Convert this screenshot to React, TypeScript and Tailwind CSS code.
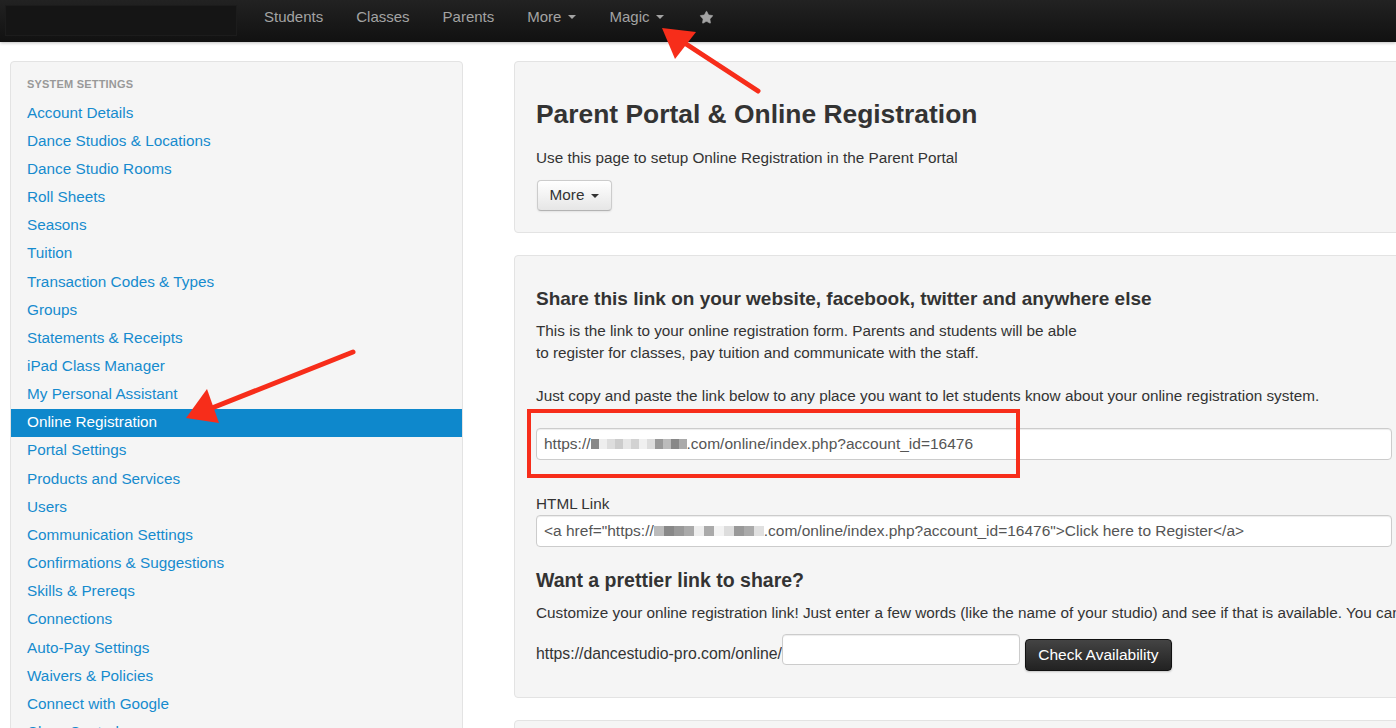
import { Star } from "lucide-react";

const SETTINGS = [
  "Account Details",
  "Dance Studios & Locations",
  "Dance Studio Rooms",
  "Roll Sheets",
  "Seasons",
  "Tuition",
  "Transaction Codes & Types",
  "Groups",
  "Statements & Receipts",
  "iPad Class Manager",
  "My Personal Assistant",
  "Online Registration",
  "Portal Settings",
  "Products and Services",
  "Users",
  "Communication Settings",
  "Confirmations & Suggestions",
  "Skills & Prereqs",
  "Connections",
  "Auto-Pay Settings",
  "Waivers & Policies",
  "Connect with Google",
  "Class Controls",
];

const Caret = () => (
  <span className="ml-[7px] inline-block h-0 w-0 border-x-[4px] border-t-[4px] border-x-transparent border-t-current align-middle" />
);

// pixelated blur over the hidden domain name
const Blur = ({ cells, w }: { cells: string[]; w: number }) => (
  <span className="inline-flex h-[10px] items-center align-middle">
    {cells.map((c, i) => (
      <span key={i} className="inline-block h-[10px]" style={{ backgroundColor: c, width: w }} />
    ))}
  </span>
);

const Navbar = () => (
  <header className="flex h-[42px] items-start bg-gradient-to-b from-[#222] to-[#111] shadow-[0_1px_3px_rgba(0,0,0,0.25)]">
    <div className="mt-[5px] ml-[5px] h-[31px] w-[232px] border border-[#1c1c1c] bg-[#151515]" />
    <nav className="mt-[7px] ml-[27px] flex items-center gap-[33px] text-[15px] leading-[20px] text-[#a3a3a3]">
      <span>Students</span>
      <span>Classes</span>
      <span>Parents</span>
      <span className="flex items-center">
        More
        <Caret />
      </span>
      <span className="flex items-center">
        Magic
        <Caret />
      </span>
      <Star className="ml-[2px] h-[15px] w-[15px] fill-[#a3a3a3] text-[#a3a3a3]" strokeWidth={1} />
    </nav>
  </header>
);

const Sidebar = () => (
  <aside className="ml-[10px] h-[700px] w-[453px] shrink-0 rounded-[4px] border border-[#e3e3e3] bg-[#f5f5f5] pt-[12px]">
    <div className="h-[21px] pl-[16px] text-[11px] leading-[21px] font-bold tracking-[0.2px] text-[#999]">
      SYSTEM SETTINGS
    </div>
    <ul className="mt-[4px]">
      {SETTINGS.map((s) => {
        const active = s === "Online Registration";
        return (
          <li
            key={s}
            className={
              active
                ? "flex h-[28.17px] items-center bg-[#0e88cc] pl-[16px] text-[15.3px] text-white"
                : "flex h-[28.17px] items-center pl-[16px] text-[15.3px] text-[#168bce]"
            }
          >
            {s}
          </li>
        );
      })}
    </ul>
  </aside>
);

const inputCls =
  "flex h-[32px] items-center rounded-[4px] border border-[#cccccc] bg-white px-[7px] text-[15.5px] text-[#555] shadow-[inset_0_1px_1px_rgba(0,0,0,0.075)] whitespace-nowrap";

const Main = () => (
  <main className="ml-[51px] w-[900px] shrink-0 text-[#333]">
    <section className="rounded-[4px] border border-[#e3e3e3] bg-[#f5f5f5] px-[21px] pt-[37px] pb-[21px]">
      <h1 className="text-[26.4px] leading-[30px] font-bold text-[#333]">Parent Portal &amp; Online Registration</h1>
      <p className="mt-[19px] text-[15.3px] leading-[20px]">Use this page to setup Online Registration in the Parent Portal</p>
      <button className="mt-[12px] ml-[1px] flex h-[31px] w-[75px] items-center justify-center rounded-[4px] border border-[#ccc] border-b-[#b3b3b3] bg-gradient-to-b from-white to-[#e6e6e6] text-[15.3px] text-[#333] shadow-[0_1px_2px_rgba(0,0,0,0.08)]">
        More
        <Caret />
      </button>
    </section>

    <section className="mt-[22px] rounded-[4px] border border-[#e3e3e3] bg-[#f5f5f5] px-[21px] pt-[31px] pb-[26px]">
      <h2 className="text-[19px] leading-[24px] font-bold">Share this link on your website, facebook, twitter and anywhere else</h2>
      <p className="mt-[9px] text-[15.3px] leading-[22px]">
        This is the link to your online registration form. Parents and students will be able
        <br />
        to register for classes, pay tuition and communicate with the staff.
      </p>
      <p className="mt-[21px] text-[15.3px] leading-[22px]">
        Just copy and paste the link below to any place you want to let students know about your online registration system.
      </p>
      <div className="relative mt-[21px]">
        <div className={inputCls}>
          https://
          <Blur
            w={8}
            cells={["#888", "#eee", "#ddd", "#ccc", "#e6e6e6", "#d2d2d2", "#f0f0f0", "#ddd", "#999", "#bbb", "#888", "#aaa"]}
          />
          .com/online/index.php?account_id=16476
        </div>
        <div className="pointer-events-none absolute top-[-19px] left-[-9px] h-[69px] w-[493px] border-[4px] border-[#f72d1a]" />
      </div>

      <div className="mt-[33px] text-[15.3px] leading-[22px]">HTML Link</div>
      <div className={inputCls}>
        &lt;a href="https://
        <Blur
          w={10}
          cells={["#bbb", "#888", "#999", "#aaa", "#eee", "#aaa", "#f3f3f3", "#ddd", "#999", "#aaa", "#e0e0e0"]}
        />
        .com/online/index.php?account_id=16476"&gt;Click here to Register&lt;/a&gt;
      </div>

      <h3 className="mt-[20px] text-[19.5px] leading-[26px] font-bold">Want a prettier link to share?</h3>
      <p className="mt-[9px] text-[15.3px] leading-[22px] whitespace-nowrap">
        Customize your online registration link! Just enter a few words (like the name of your studio) and see if that is available. You can then share it.
      </p>
      <div className="mt-[10px] flex items-start">
        <span className="mt-[9px] text-[15.8px] leading-[22px]">https://dancestudio-pro.com/online/</span>
        <div className="h-[31px] w-[238px] rounded-[4px] border border-[#ccc] bg-white shadow-[inset_0_1px_1px_rgba(0,0,0,0.075)]" />
        <button className="mt-[5px] ml-[5px] h-[32px] w-[147px] rounded-[4px] border border-[#111] bg-gradient-to-b from-[#444] to-[#222] text-[15.5px] text-white shadow-[0_1px_2px_rgba(0,0,0,0.2)]">
          Check Availability
        </button>
      </div>
    </section>

    <section className="mt-[22px] h-[60px] rounded-[4px] border border-[#e3e3e3] bg-[#f5f5f5]" />
  </main>
);

// red annotation arrows drawn over the screenshot
const Arrows = () => (
  <svg className="pointer-events-none absolute top-0 left-0" width={1396} height={728}>
    <line x1={758} y1={91} x2={683} y2={42} stroke="#f72d1a" strokeWidth={5} strokeLinecap="round" />
    <polygon points="662,28 696,32 675,59" fill="#f72d1a" />
    <line x1={353} y1={352} x2={212} y2={408} stroke="#f72d1a" strokeWidth={5} strokeLinecap="round" />
    <polygon points="186,418 207,389 219,423" fill="#f72d1a" />
  </svg>
);

export default function App() {
  return (
    <div className="relative h-[728px] w-[1396px] overflow-hidden bg-white font-['Liberation_Sans',Arial,sans-serif]">
      <Navbar />
      <div className="mt-[19px] flex items-start">
        <Sidebar />
        <Main />
      </div>
      <Arrows />
    </div>
  );
}
